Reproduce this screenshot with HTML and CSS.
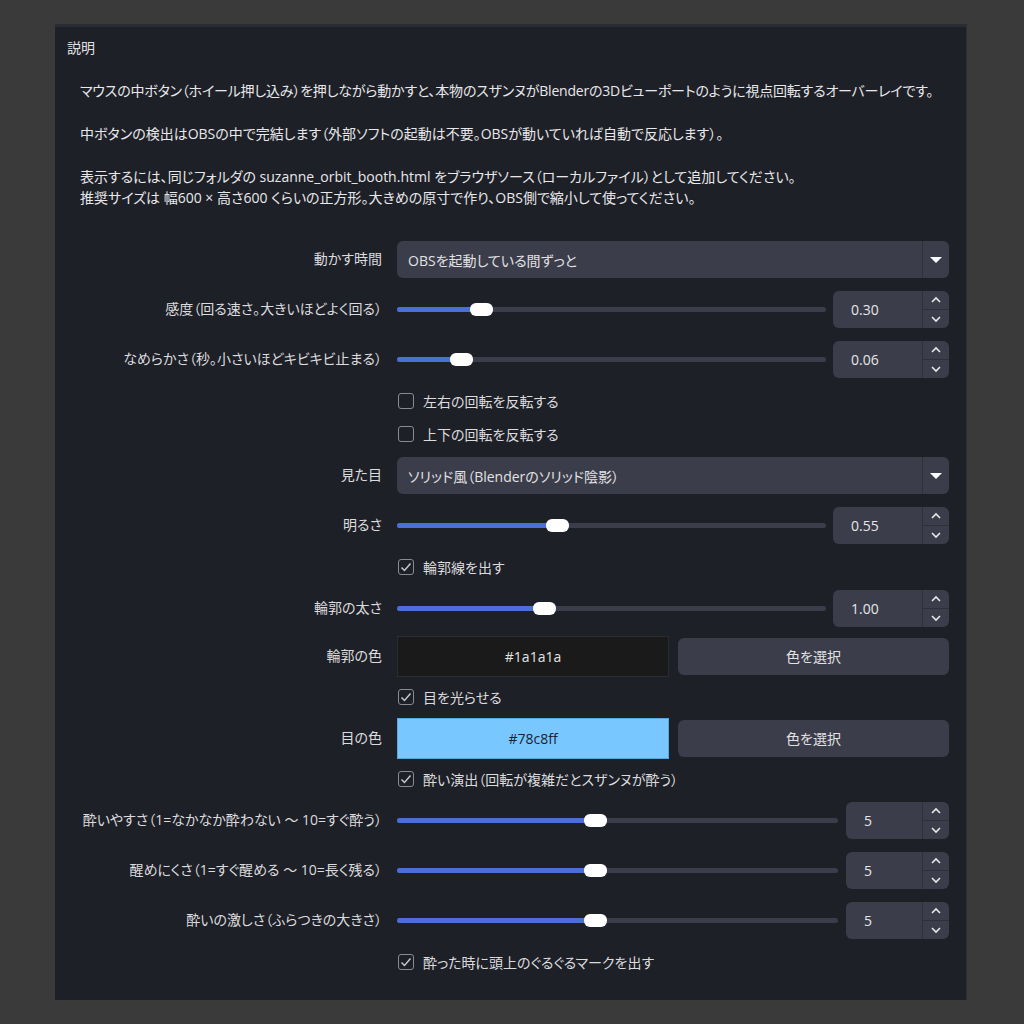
FILE: index.html
```html
<!DOCTYPE html>
<html lang="ja">
<head>
<meta charset="utf-8">
<link rel="stylesheet" href="styles.css">
</head>
<body>
<div class="panel">
  <div class="hdr">説明</div>
  <div class="desc">
    <p>マウスの中ボタン（ホイール押し込み）を押しながら動かすと、本物のスザンヌがBlenderの3Dビューポートのように視点回転するオーバーレイです。</p>
    <p>中ボタンの検出はOBSの中で完結します（外部ソフトの起動は不要。OBSが動いていれば自動で反応します）。</p>
    <p>表示するには、同じフォルダの suzanne_orbit_booth.html をブラウザソース（ローカルファイル）として追加してください。<br>推奨サイズは 幅600 × 高さ600 くらいの正方形。大きめの原寸で作り、OBS側で縮小して使ってください。</p>
  </div>
  <div class="form">
    <div class="lbl">動かす時間</div>
    <div class="combo"><span class="ctext">OBSを起動している間ずっと</span><span class="carrow"><i></i></span></div>

    <div class="lbl">感度（回る速さ。大きいほどよく回る）</div>
    <div class="srow">
      <div class="slider"><div class="fill" style="width:84px"></div><div class="knob" style="left:73px"></div></div>
      <div class="spin"><span class="sval">0.30</span><span class="sbtn"><b class="up"><svg viewBox="0 0 12 8"><polyline points="2,6 6,2 10,6"/></svg></b><b class="dn"><svg viewBox="0 0 12 8"><polyline points="2,2 6,6 10,2"/></svg></b></span></div>
    </div>

    <div class="lbl">なめらかさ（秒。小さいほどキビキビ止まる）</div>
    <div class="srow">
      <div class="slider"><div class="fill" style="width:64px"></div><div class="knob" style="left:53px"></div></div>
      <div class="spin"><span class="sval">0.06</span><span class="sbtn"><b class="up"><svg viewBox="0 0 12 8"><polyline points="2,6 6,2 10,6"/></svg></b><b class="dn"><svg viewBox="0 0 12 8"><polyline points="2,2 6,6 10,2"/></svg></b></span></div>
    </div>

    <div class="chk"><span class="box"></span>左右の回転を反転する</div>
    <div class="chk"><span class="box"></span>上下の回転を反転する</div>

    <div class="lbl">見た目</div>
    <div class="combo"><span class="ctext">ソリッド風（Blenderのソリッド陰影）</span><span class="carrow"><i></i></span></div>

    <div class="lbl">明るさ</div>
    <div class="srow">
      <div class="slider"><div class="fill" style="width:160px"></div><div class="knob" style="left:149px"></div></div>
      <div class="spin"><span class="sval">0.55</span><span class="sbtn"><b class="up"><svg viewBox="0 0 12 8"><polyline points="2,6 6,2 10,6"/></svg></b><b class="dn"><svg viewBox="0 0 12 8"><polyline points="2,2 6,6 10,2"/></svg></b></span></div>
    </div>

    <div class="chk"><span class="box on"><svg viewBox="0 0 16 16"><polyline points="3.5,8.5 6.5,11.5 12.5,4.5"/></svg></span>輪郭線を出す</div>

    <div class="lbl">輪郭の太さ</div>
    <div class="srow">
      <div class="slider"><div class="fill" style="width:147px"></div><div class="knob" style="left:136px"></div></div>
      <div class="spin"><span class="sval">1.00</span><span class="sbtn"><b class="up"><svg viewBox="0 0 12 8"><polyline points="2,6 6,2 10,6"/></svg></b><b class="dn"><svg viewBox="0 0 12 8"><polyline points="2,2 6,6 10,2"/></svg></b></span></div>
    </div>

    <div class="lbl up2">輪郭の色</div>
    <div class="crow up2">
      <div class="swatch dark">#1a1a1a</div>
      <div class="pick">色を選択</div>
    </div>

    <div class="chk"><span class="box on"><svg viewBox="0 0 16 16"><polyline points="3.5,8.5 6.5,11.5 12.5,4.5"/></svg></span>目を光らせる</div>

    <div class="lbl">目の色</div>
    <div class="crow">
      <div class="swatch light">#78c8ff</div>
      <div class="pick">色を選択</div>
    </div>

    <div class="chk"><span class="box on"><svg viewBox="0 0 16 16"><polyline points="3.5,8.5 6.5,11.5 12.5,4.5"/></svg></span>酔い演出（回転が複雑だとスザンヌが酔う）</div>

    <div class="lbl">酔いやすさ（1=なかなか酔わない ～ 10=すぐ酔う）</div>
    <div class="srow narrow">
      <div class="slider"><div class="fill" style="width:198px"></div><div class="knob" style="left:187px"></div></div>
      <div class="spin"><span class="sval">5</span><span class="sbtn"><b class="up"><svg viewBox="0 0 12 8"><polyline points="2,6 6,2 10,6"/></svg></b><b class="dn"><svg viewBox="0 0 12 8"><polyline points="2,2 6,6 10,2"/></svg></b></span></div>
    </div>

    <div class="lbl">醒めにくさ（1=すぐ醒める ～ 10=長く残る）</div>
    <div class="srow narrow">
      <div class="slider"><div class="fill" style="width:198px"></div><div class="knob" style="left:187px"></div></div>
      <div class="spin"><span class="sval">5</span><span class="sbtn"><b class="up"><svg viewBox="0 0 12 8"><polyline points="2,6 6,2 10,6"/></svg></b><b class="dn"><svg viewBox="0 0 12 8"><polyline points="2,2 6,6 10,2"/></svg></b></span></div>
    </div>

    <div class="lbl">酔いの激しさ（ふらつきの大きさ）</div>
    <div class="srow narrow">
      <div class="slider"><div class="fill" style="width:198px"></div><div class="knob" style="left:187px"></div></div>
      <div class="spin"><span class="sval">5</span><span class="sbtn"><b class="up"><svg viewBox="0 0 12 8"><polyline points="2,6 6,2 10,6"/></svg></b><b class="dn"><svg viewBox="0 0 12 8"><polyline points="2,2 6,6 10,2"/></svg></b></span></div>
    </div>

    <div class="chk"><span class="box on"><svg viewBox="0 0 16 16"><polyline points="3.5,8.5 6.5,11.5 12.5,4.5"/></svg></span>酔った時に頭上のぐるぐるマークを出す</div>
  </div>
</div>
</body>
</html>
```
FILE: styles.css
```css
* { box-sizing: border-box; }
html, body { margin: 0; padding: 0; }
body {
  background: #3a3a3a;
  width: 1024px;
  height: 1024px;
  overflow: hidden;
  font-family: "Open Sans", "Noto Sans CJK JP", sans-serif;
  font-size: 14px;
  font-feature-settings: "palt";
  color: #e2e2e4;
}
.panel {
  margin: 24px 0 0 55px;
  width: 912px;
  height: 976px;
  background: #1e2028;
  border-top: 3px solid #2a2c34;
  border-right: 1px solid #2c2e34;
}
.hdr {
  padding: 11px 0 0 12px;
  line-height: 20px;
  height: 31px;
}
.desc {
  margin: 22px 0 0 25px;
  line-height: 21px;
  font-size: 14px;
  color: #e8e8ea;
}
.desc p { margin: 0 0 22px 0; white-space: nowrap; }
.desc p:first-child { letter-spacing: -0.2px; }
.desc p:last-child { margin-bottom: 0; }
.form {
  margin-top: 33px;
  padding: 0 18px 0 15px;
  display: grid;
  grid-template-columns: 312px 552px;
  column-gap: 15px;
  row-gap: 13px;
}
.lbl {
  grid-column: 1;
  display: flex;
  align-items: center;
  justify-content: flex-end;
  white-space: nowrap;
  color: #dcdcde;
  padding-bottom: 3px;
}
.up2 { margin-top: -2px; }
.combo {
  grid-column: 2;
  height: 37px;
  background: #3b3d4a;
  border-radius: 6px;
  display: flex;
  align-items: center;
}
.ctext { flex: 1; padding-left: 11px; }
.carrow {
  width: 27px;
  height: 100%;
  border-left: 1px solid #2e303a;
  display: flex;
  align-items: center;
  justify-content: center;
}
.carrow i {
  width: 0; height: 0;
  border-left: 6px solid transparent;
  border-right: 6px solid transparent;
  border-top: 6px solid #ffffff;
}
.srow {
  grid-column: 2;
  display: flex;
  align-items: center;
  gap: 7px;
}
.slider {
  position: relative;
  flex: 1;
  height: 5px;
  background: #3b3d4a;
  border-radius: 3px;
}
.fill {
  position: absolute;
  left: 0; top: 0; bottom: 0;
  background: #4a70d8;
  border-radius: 3px;
}
.knob {
  position: absolute;
  top: -4px;
  width: 23px;
  height: 13px;
  background: #ffffff;
  border-radius: 6px;
}
.spin {
  width: 116px;
  height: 37px;
  background: #3b3d4a;
  border-radius: 6px;
  display: flex;
}
.narrow { gap: 8px; }
.narrow .spin { width: 103px; }
.sval {
  flex: 1;
  display: flex;
  align-items: center;
  padding-left: 18px;
  color: #e6e6e8;
}
.sbtn {
  width: 27px;
  border-left: 1px solid #2e303a;
  display: flex;
  flex-direction: column;
}
.sbtn b {
  flex: 1;
  display: flex;
  align-items: center;
  justify-content: center;
}
.sbtn b.up { border-bottom: 1px solid #2e303a; }
.sbtn svg { width: 12px; height: 8px; }
.sbtn polyline { fill: none; stroke: #e8e8ea; stroke-width: 1.6; }
.chk {
  grid-column: 2;
  height: 20px;
  display: flex;
  align-items: center;
  padding-left: 1px;
  color: #dcdcde;
}
.box {
  width: 16px;
  height: 16px;
  border: 1.5px solid #8a8b90;
  border-radius: 3px;
  margin-right: 9px;
  display: flex;
  align-items: center;
  justify-content: center;
}
.box svg { width: 16px; height: 16px; flex: none; }
.box polyline { fill: none; stroke: #c8c8cc; stroke-width: 1.5; }
.crow {
  grid-column: 2;
  height: 36px;
  display: flex;
  align-items: center;
  gap: 9px;
}
.swatch {
  width: 272px;
  height: 41px;
  margin: -2px 0 -3px 0;
  display: flex;
  align-items: center;
  justify-content: center;
  border: 1px solid #2b2c31;
}
.swatch.dark { background: #1a1a1a; color: #e4e4e4; }
.swatch.light { background: #78c8ff; color: #1a2230; border-color: #5aa6de; }
.pick {
  flex: 1;
  height: 37px;
  background: #3b3d4a;
  border-radius: 6px;
  display: flex;
  align-items: center;
  justify-content: center;
}
```
